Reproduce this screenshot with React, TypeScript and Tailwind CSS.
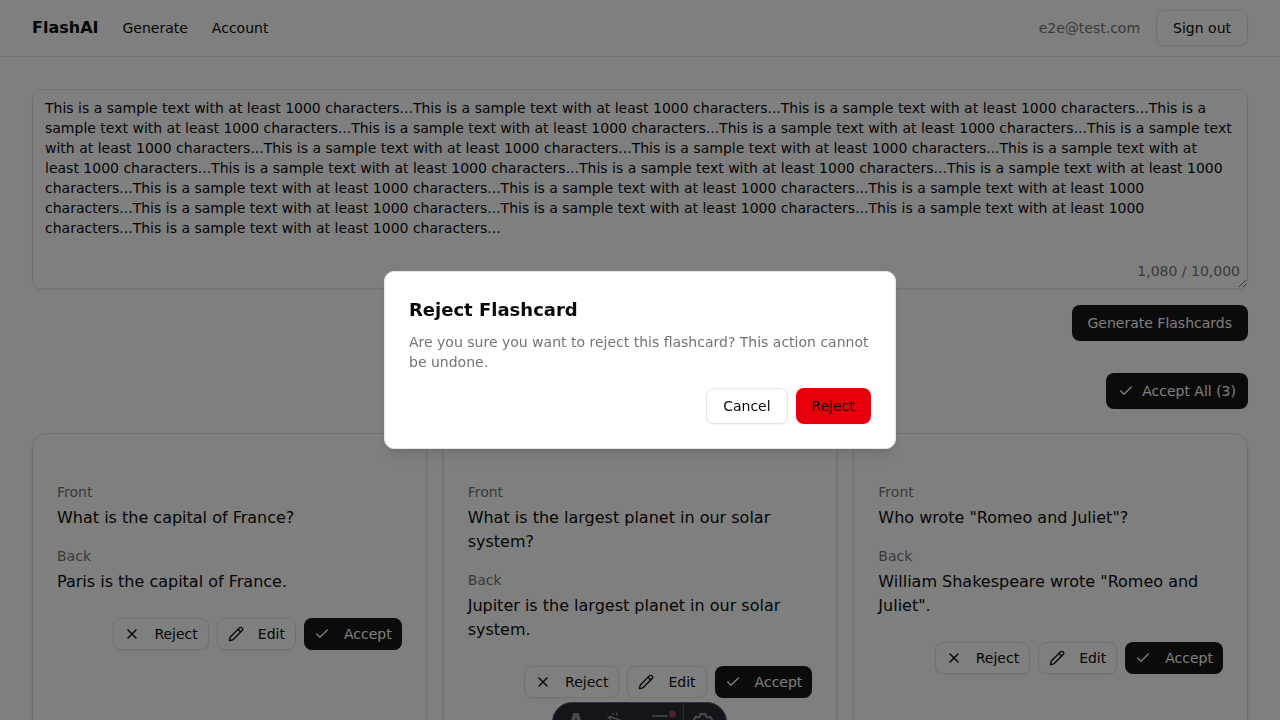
import type { ReactNode } from "react";
import { Check, Pencil, X } from "lucide-react";

const sampleText = "This is a sample text with at least 1000 characters...".repeat(20);

const flashcards = [
  { front: "What is the capital of France?", back: "Paris is the capital of France." },
  { front: "What is the largest planet in our solar system?", back: "Jupiter is the largest planet in our solar system." },
  { front: 'Who wrote "Romeo and Juliet"?', back: 'William Shakespeare wrote "Romeo and Juliet".' },
];

function OutlineButton({ children }: { children: ReactNode }) {
  return (
    <button className="flex h-9 items-center rounded-lg border border-[#e5e5e5] bg-white px-4 text-sm font-medium text-[#0a0a0a] shadow-xs">
      {children}
    </button>
  );
}

function SmallOutlineButton({ children }: { children: ReactNode }) {
  return (
    <button className="flex h-8 items-center gap-1.5 rounded-lg border border-[#e5e5e5] bg-white px-2.5 text-sm font-medium shadow-xs">
      {children}
    </button>
  );
}

function Flashcard({ front, back }: { front: string; back: string }) {
  return (
    <article className="flex flex-col rounded-[14px] border border-[#e5e5e5] bg-white px-6 pt-12 pb-12 shadow-sm">
      <h3 className="text-sm font-medium text-[#737373]">Front</h3>
      <p className="mt-1">{front}</p>
      <h3 className="mt-4 text-sm font-medium text-[#737373]">Back</h3>
      <p className="mt-1">{back}</p>
      <div className="mt-6 flex justify-end gap-2">
        <SmallOutlineButton>
          <X className="mr-2 size-4" />
          Reject
        </SmallOutlineButton>
        <SmallOutlineButton>
          <Pencil className="mr-2 size-4" />
          Edit
        </SmallOutlineButton>
        <button className="flex h-8 items-center gap-1.5 rounded-lg bg-[#171717] px-2.5 text-sm font-medium text-[#fafafa] shadow-xs">
          <Check className="mr-2 size-4" />
          Accept
        </button>
      </div>
    </article>
  );
}

function DevToolbar() {
  return (
    <div className="fixed inset-x-0 -bottom-[22px] flex justify-center pr-px">
      <div className="flex h-10 w-[175px] overflow-hidden rounded-full border border-[#5c6272] bg-[#282b35]">
        <svg viewBox="0 0 173 38" className="h-[38px] w-[173px]" fill="none">
          <path d="M20.2 10h5.6L30 25l-4.6-1.3-1.8-8.2h-1.2l-1.8 8.2L16 25Z" fill="#92939a" />
          <path d="m56.5 13.5 14 5-6 2-3 6Z" stroke="#92939a" strokeWidth="1.5" strokeLinejoin="round" />
          <path d="m60.5 12-1-2m4.5 2.5-.5-3m-7 5.5-2-.5" stroke="#92939a" strokeWidth="1.3" />
          <path d="M99 13H114.5M99 19H114.5" stroke="#92939a" strokeWidth="1.6" />
          <circle cx="119.5" cy="11" r="3.5" fill="#8c4665" />
          <path d="M130.5 0v38" stroke="#535764" strokeWidth="1.2" />
          <path
            d="M147.6 11h4.8l.6 2.4 1.8 1 2.4-.7 2.4 4.1-1.7 1.8v2l1.7 1.8-2.4 4-2.4-.7-1.8 1-.6 2.4h-4.8l-.6-2.4-1.8-1-2.4.7-2.4-4 1.7-1.8v-2l-1.7-1.8 2.4-4.1 2.4.7 1.8-1Z"
            stroke="#92939a"
            strokeWidth="2"
            strokeLinejoin="round"
          />
          <circle cx="150" cy="21" r="3.5" stroke="#92939a" strokeWidth="1.5" />
        </svg>
      </div>
    </div>
  );
}

function RejectDialog() {
  return (
    <div className="fixed inset-0 flex items-center justify-center bg-black/50">
      <div role="alertdialog" className="flex w-lg flex-col gap-4 rounded-[10px] border border-[#e5e5e5] bg-white p-6 shadow-lg">
        <div className="flex flex-col gap-2">
          <h2 className="text-lg font-semibold">Reject Flashcard</h2>
          <p className="text-sm text-[#737373]">
            Are you sure you want to reject this flashcard? This action cannot be undone.
          </p>
        </div>
        <div className="flex justify-end gap-2">
          <OutlineButton>Cancel</OutlineButton>
          <button className="flex h-9 items-center rounded-lg bg-[#e7000b] px-4 text-sm font-medium shadow-xs">
            Reject
          </button>
        </div>
      </div>
    </div>
  );
}

export default function App() {
  return (
    <div className="h-screen overflow-hidden bg-white font-['DejaVu_Sans',sans-serif] text-[#0a0a0a]">
      <header className="flex h-[57px] items-center justify-between border-b border-[#e5e5e5] px-8">
        <nav className="flex items-center gap-6 text-sm font-medium">
          <a className="text-base font-bold">FlashAI</a>
          <a>Generate</a>
          <a>Account</a>
        </nav>
        <div className="flex items-center gap-4">
          <span className="text-sm text-[#737373]">e2e@test.com</span>
          <OutlineButton>Sign out</OutlineButton>
        </div>
      </header>
      <main className="px-8 py-8">
        <div className="relative">
          <textarea
            readOnly
            value={sampleText}
            className="block h-[200px] w-full resize-y rounded-lg border border-[#e5e5e5] bg-transparent px-3 py-2 text-sm shadow-xs"
          />
          <span className="absolute right-2 bottom-2 text-sm text-[#737373]">1,080 / 10,000</span>
        </div>
        <div className="mt-4 flex justify-end">
          <button className="flex h-9 items-center rounded-lg bg-[#171717] px-4 text-sm font-medium text-[#fafafa] shadow-xs">
            Generate Flashcards
          </button>
        </div>
        <div className="mt-8 flex justify-end">
          <button className="flex h-9 items-center gap-2 rounded-lg bg-[#171717] px-3 text-sm font-medium text-[#fafafa] shadow-xs">
            <Check className="size-4" />
            Accept All (3)
          </button>
        </div>
        <section className="mt-6 grid grid-cols-3 gap-4">
          {flashcards.map((card) => (
            <Flashcard key={card.front} front={card.front} back={card.back} />
          ))}
        </section>
      </main>
      <DevToolbar />
      <RejectDialog />
    </div>
  );
}
